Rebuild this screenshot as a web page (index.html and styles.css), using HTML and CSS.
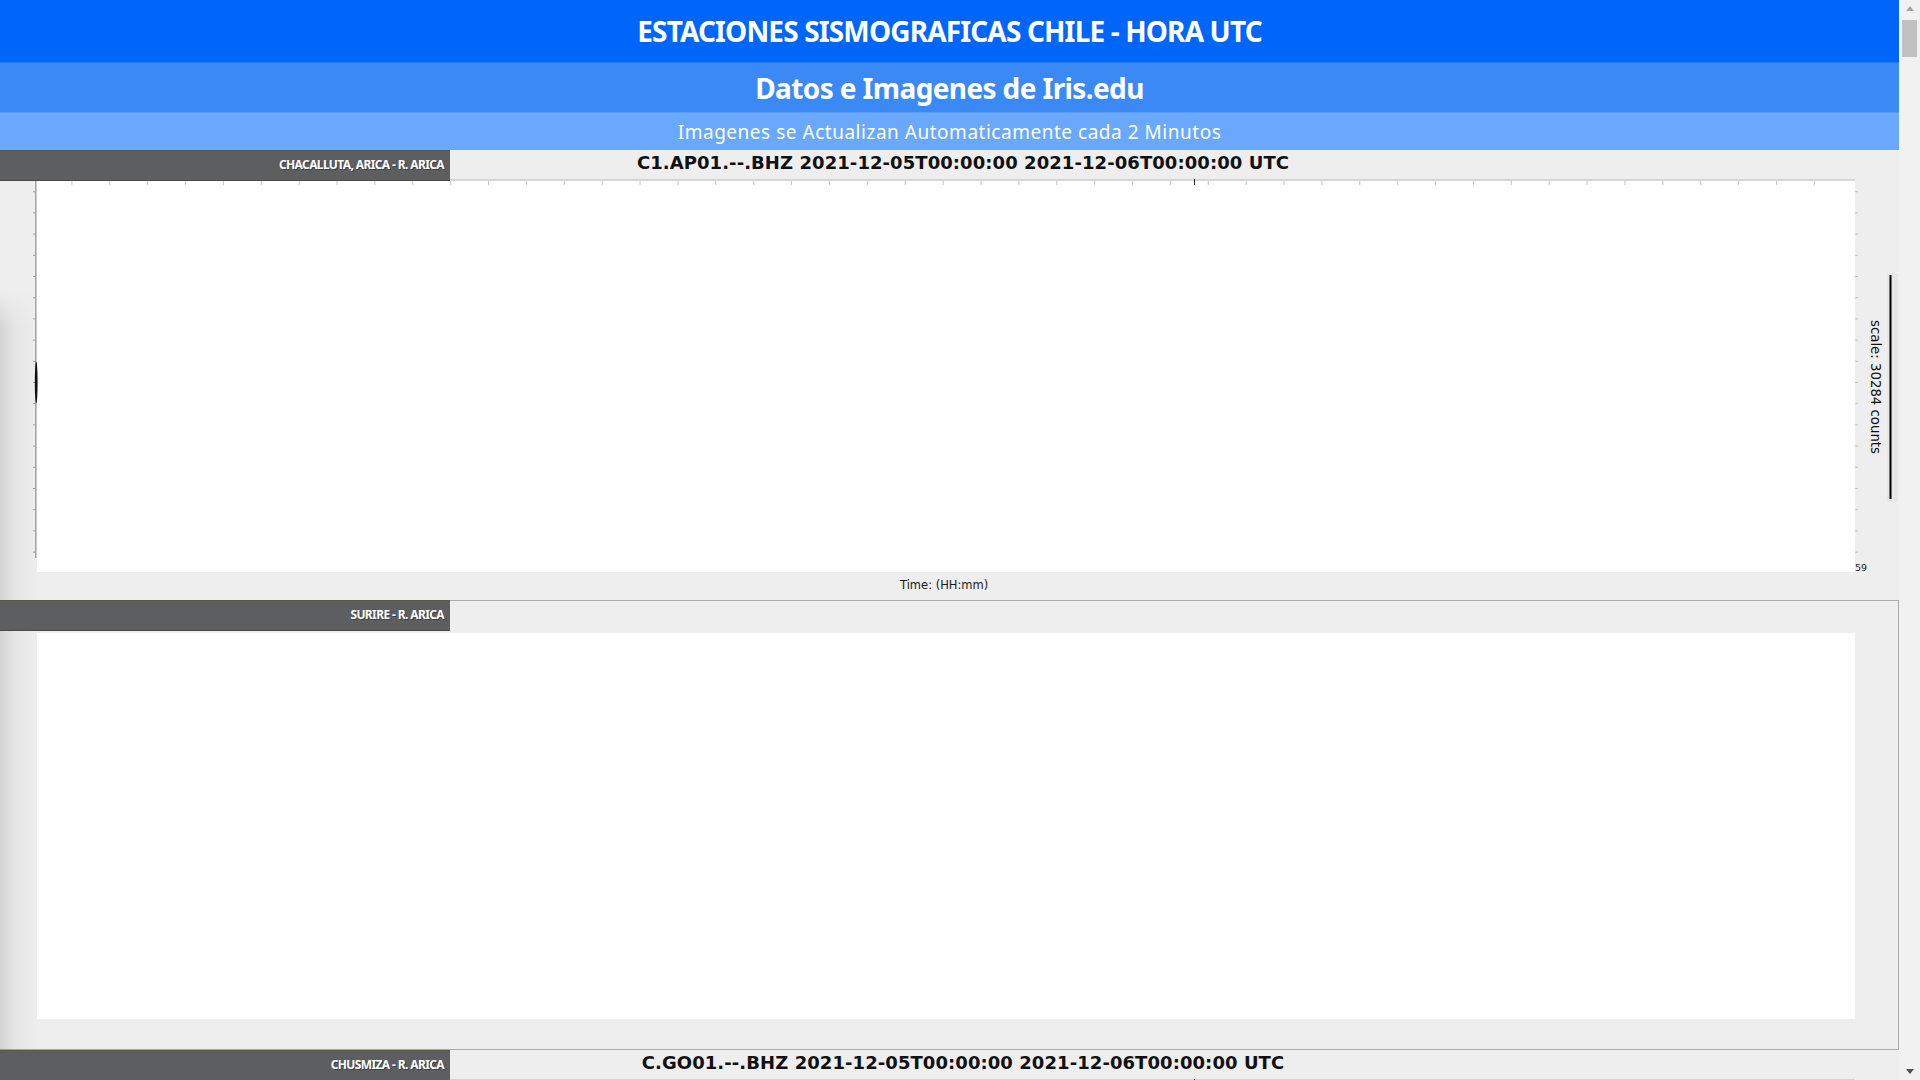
FILE: index.html
```html
<!DOCTYPE html>
<html lang="es">
<head>
<meta charset="utf-8">
<title>Estaciones Sismograficas Chile - Hora UTC</title>
<link rel="stylesheet" href="styles.css">
</head>
<body>
<div class="page">
  <header class="band band-1"><h1 class="band-title">ESTACIONES SISMOGRAFICAS CHILE - HORA UTC</h1></header>
  <div class="band band-2"><h2 class="band-sub">Datos e Imagenes de Iris.edu</h2></div>
  <div class="band band-3"><p class="band-note">Imagenes se Actualizan Automaticamente cada 2 Minutos</p></div>

  <section class="station">
    <div class="station-head">
      <div class="station-label">CHACALLUTA, ARICA - R. ARICA</div>
      <div class="station-title">C1.AP01.--.BHZ 2021-12-05T00:00:00 2021-12-06T00:00:00 UTC</div>
    </div>
    <svg class="chart" width="1899" height="421" viewBox="0 0 1899 421">
      <rect x="37" y="0" width="1818" height="2" fill="#d5d5d5"/>
      <rect x="37" y="2" width="1818" height="391" fill="#ffffff"/>
      <path d="M71.88 2v4M109.76 2v4M147.64 2v4M185.52 2v4M223.4 2v4M261.28 2v4M299.16 2v4M337.04 2v4M374.92 2v4M412.8 2v4M450.68 2v4M488.56 2v4M526.44 2v4M564.32 2v4M602.2 2v4M640.08 2v4M677.96 2v4M715.84 2v4M753.72 2v4M791.6 2v4M829.48 2v4M867.36 2v4M905.24 2v4M943.12 2v4M981 2v4M1018.88 2v4M1056.76 2v4M1094.64 2v4M1132.52 2v4M1170.4 2v4M1208.28 2v4M1246.16 2v4M1284.04 2v4M1321.92 2v4M1359.8 2v4M1397.68 2v4M1435.56 2v4M1473.44 2v4M1511.32 2v4M1549.2 2v4M1587.08 2v4M1624.96 2v4M1662.84 2v4M1700.72 2v4M1738.6 2v4M1776.48 2v4M1814.36 2v4" stroke="#c4c4c4" stroke-width="1"/>
      <path d="M1194.5 0v6" stroke="#333" stroke-width="1"/>
      <path d="M35.75 1V379" stroke="#a8a8a8" stroke-width="1.5"/>
      <path d="M33 12.7h3M33 33.9h3M33 55.1h3M33 76.3h3M33 97.5h3M33 118.7h3M33 139.9h3M33 161.1h3M33 182.3h3M33 203.5h3M33 224.7h3M33 245.9h3M33 267.1h3M33 288.3h3M33 309.5h3M33 330.7h3M33 351.9h3M33 373.1h3" stroke="#a0a0a0" stroke-width="1"/>
      <path d="M1855 12.7h3M1855 33.9h3M1855 55.1h3M1855 76.3h3M1855 97.5h3M1855 118.7h3M1855 139.9h3M1855 161.1h3M1855 182.3h3M1855 203.5h3M1855 224.7h3M1855 245.9h3M1855 267.1h3M1855 288.3h3M1855 309.5h3M1855 330.7h3M1855 351.9h3M1855 373.1h3" stroke="#bdbdbd" stroke-width="1"/>
      <ellipse cx="36.2" cy="203.5" rx="1.4" ry="21" fill="#111"/>
      <text class="chart-tick" x="1855" y="392.3">59</text>
      <text class="chart-axis" x="900" y="409.7">Time: (HH:mm)</text>
      <rect x="1887" y="94" width="11" height="229" fill="#e7e7e7"/>
      <rect x="1889.5" y="96" width="2" height="224" fill="#000"/>
      <text class="chart-scale" transform="translate(1870.5 208) rotate(90)" text-anchor="middle">scale: 30284 counts</text>
    </svg>
  </section>

  <section class="station station-boxed">
    <div class="station-head station-head-flush">
      <div class="station-label">SURIRE - R. ARICA</div>
    </div>
    <div class="blank-plot"></div>
  </section>

  <section class="station">
    <div class="station-head">
      <div class="station-label">CHUSMIZA - R. ARICA</div>
      <div class="station-title">C.GO01.--.BHZ 2021-12-05T00:00:00 2021-12-06T00:00:00 UTC</div>
    </div>
    <svg class="chart" width="1899" height="421" viewBox="0 0 1899 421">
      <rect x="37" y="0" width="1818" height="2" fill="#d5d5d5"/>
      <rect x="37" y="2" width="1818" height="391" fill="#ffffff"/>
      <path d="M71.88 2v4M109.76 2v4M147.64 2v4M185.52 2v4M223.4 2v4M261.28 2v4M299.16 2v4M337.04 2v4M374.92 2v4M412.8 2v4M450.68 2v4M488.56 2v4M526.44 2v4M564.32 2v4M602.2 2v4M640.08 2v4M677.96 2v4M715.84 2v4M753.72 2v4M791.6 2v4M829.48 2v4M867.36 2v4M905.24 2v4M943.12 2v4M981 2v4M1018.88 2v4M1056.76 2v4M1094.64 2v4M1132.52 2v4M1170.4 2v4M1208.28 2v4M1246.16 2v4M1284.04 2v4M1321.92 2v4M1359.8 2v4M1397.68 2v4M1435.56 2v4M1473.44 2v4M1511.32 2v4M1549.2 2v4M1587.08 2v4M1624.96 2v4M1662.84 2v4M1700.72 2v4M1738.6 2v4M1776.48 2v4M1814.36 2v4" stroke="#c4c4c4" stroke-width="1"/>
      <path d="M1194.5 0v6" stroke="#333" stroke-width="1"/>
      <path d="M35.75 1V379" stroke="#a8a8a8" stroke-width="1.5"/>
    </svg>
  </section>
</div>
<div class="scrollbar">
  <div class="sb-btn"><span class="sb-arrow-up"></span></div>
  <div class="sb-track"><div class="sb-thumb"></div></div>
  <div class="sb-btn"><span class="sb-arrow-down"></span></div>
</div>
<div class="edge-shadow"></div>
</body>
</html>
```

FILE: styles.css
```css
html, body {
  margin: 0;
  padding: 0;
}

body {
  display: flex;
  height: 100vh;
  overflow: hidden;
  background: #eeeeee;
  font-family: "Noto Sans", "Open Sans", sans-serif;
}

.page {
  flex: none;
  width: 1899px;
  height: 100vh;
  overflow: hidden;
  background: #eeeeee;
}

/* ---------- header bands ---------- */
.band {
  display: flex;
  align-items: center;
  justify-content: center;
  color: #ffffff;
}

.band-1 {
  height: 62px;
  background: #0066fa;
  border-bottom: 1px solid #1f78f8;
}

.band-2 {
  height: 49px;
  background: #3a89f5;
  border-bottom: 1px solid #579bf6;
}

.band-3 {
  height: 37px;
  background: #69a8fb;
}

.band-title {
  margin: 0;
  font-family: "Noto Sans", "Open Sans", sans-serif;
  font-weight: 700;
  font-size: 28px;
  font-stretch: semi-condensed;
  letter-spacing: -0.85px;
  white-space: nowrap;
}

.band-sub {
  margin: 0;
  font-family: "Noto Sans", "Open Sans", sans-serif;
  font-weight: 700;
  font-size: 28px;
  letter-spacing: -0.62px;
  white-space: nowrap;
}

.band-note {
  margin: 0;
  font-family: "Noto Sans", "Open Sans", sans-serif;
  font-weight: 400;
  font-size: 19px;
  letter-spacing: 0.52px;
  white-space: nowrap;
}

/* ---------- station panels ---------- */
.station {
  background: #eeeeee;
}

.station-head {
  display: flex;
  align-items: flex-start;
  height: 29px;
}

.station-label {
  flex: none;
  position: relative;
  z-index: 1;
  box-sizing: border-box;
  width: 450px;
  height: 31px;
  padding-right: 6px;
  background: #5c5e60;
  border-top: 1px solid #5d5a3c;
  border-bottom: 1px solid #48494a;
  color: #ffffff;
  text-align: right;
  font-family: "Noto Sans", "Open Sans", sans-serif;
  font-weight: 700;
  font-size: 12px;
  font-stretch: semi-condensed;
  letter-spacing: -0.62px;
  line-height: 28px;
  text-shadow: 1px 1px 0 rgba(0, 0, 0, 0.35);
  white-space: nowrap;
}

.station-title {
  flex: 1;
  height: 29px;
  padding-right: 423px;
  text-align: center;
  font-family: "DejaVu Sans", "Liberation Sans", sans-serif;
  font-weight: 700;
  font-size: 18px;
  letter-spacing: 0.07px;
  line-height: 26px;
  color: #111111;
  white-space: nowrap;
}

.chart {
  display: block;
}

.chart-tick {
  font-family: "DejaVu Sans", sans-serif;
  font-size: 9.5px;
  fill: #222222;
}

.chart-axis {
  font-family: "DejaVu Sans", sans-serif;
  font-size: 11.5px;
  fill: #1a1a1a;
}

.chart-scale {
  font-family: "DejaVu Sans", sans-serif;
  font-size: 13.3px;
  fill: #111111;
}

.station-boxed {
  border-top: 1px solid #ababab;
  border-right: 1px solid #ababab;
  border-bottom: 1px solid #ababab;
  padding-bottom: 30px;
}

.station-head-flush {
  height: 30px;
}

.station-head-flush .station-label {
  margin-top: -1px;
}

.blank-plot {
  margin: 2px 0 0 37px;
  width: 1818px;
  height: 386px;
  background: #ffffff;
}

/* ---------- scrollbar ---------- */
.scrollbar {
  flex: 1;
  display: flex;
  flex-direction: column;
  height: 100vh;
  background: #f1f1f1;
}

.sb-btn {
  flex: none;
  height: 17px;
  display: flex;
  align-items: center;
  justify-content: center;
}

.sb-arrow-up {
  width: 0;
  height: 0;
  border-left: 4px solid transparent;
  border-right: 4px solid transparent;
  border-bottom: 5px solid #a3a3a3;
}

.sb-arrow-down {
  width: 0;
  height: 0;
  border-left: 4.5px solid transparent;
  border-right: 4.5px solid transparent;
  border-top: 5px solid #505050;
}

.sb-track {
  flex: 1;
  padding: 3px 3px 0 3px;
}

.sb-thumb {
  height: 37px;
  background: #c1c1c1;
}

/* soft shadow cast along the left edge */
.edge-shadow {
  position: fixed;
  left: 0;
  top: 290px;
  bottom: 0;
  width: 40px;
  pointer-events: none;
  background: linear-gradient(to right, rgba(0, 0, 0, 0.11), rgba(0, 0, 0, 0.04) 35%, rgba(0, 0, 0, 0) 100%);
  -webkit-mask-image: linear-gradient(to bottom, transparent, #000 40px);
  mask-image: linear-gradient(to bottom, transparent, #000 40px);
}
```
